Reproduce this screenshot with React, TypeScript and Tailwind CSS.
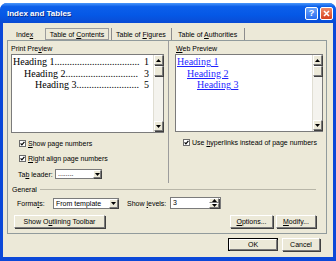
import React from 'react';

const ui = "font-['Liberation_Sans',Arial,sans-serif] text-[7px] leading-[9px] text-black";

function Check() {
    return (
        <svg width="7" height="7" viewBox="0 0 7 7" className="shrink-0">
            <rect x="0.5" y="0.5" width="6" height="6" fill="#fff" stroke="#6b6b6b" />
            <path d="M1.6 3.3 L2.9 4.8 L5.4 1.8" fill="none" stroke="#000" strokeWidth="1.2" />
        </svg>
    );
}

function Arrow({ down = true }: { down?: boolean }) {
    return (
        <svg width="5" height="3" viewBox="0 0 5 3">
            {down ? <path d="M0 0 H5 L2.5 3 Z" fill="#000" /> : <path d="M0 3 H5 L2.5 0 Z" fill="#000" />}
        </svg>
    );
}

function Btn3d({ className = '', children }: { className?: string; children?: React.ReactNode }) {
    return (
        <div
            className={`flex items-center justify-center bg-[#ece9d8] border border-t-white border-l-white border-r-[#7a7a7a] border-b-[#7a7a7a] shadow-[1px_1px_0_#404040] ${className}`}
        >
            {children}
        </div>
    );
}

function Scrollbar() {
    return (
        <div className="w-[10px] shrink-0 flex flex-col bg-[#f4f3ee] border-l border-[#e0ded3]">
            <Btn3d className="h-[10px] w-[9px]">
                <Arrow down={false} />
            </Btn3d>
            <Btn3d className="h-[10px] w-[9px] mt-px" />
            <div className="flex-1" />
            <Btn3d className="h-[10px] w-[9px] mb-px">
                <Arrow />
            </Btn3d>
        </div>
    );
}

// dots are counted per row so the leader fills the line without clipping
function Leader({ indent, label, page, dots }: { indent: string; label: string; page: string; dots: number }) {
    return (
        <div className={`flex justify-between whitespace-nowrap ${indent}`}>
            <span>
                {label}
                {'.'.repeat(dots)}
            </span>
            <span>{page}</span>
        </div>
    );
}

function Button({ children, w, def = false }: { children: React.ReactNode; w: string; def?: boolean }) {
    return (
        <div className={`${w} h-[13px] ${def ? 'border border-black' : ''}`}>
            <Btn3d className="h-full w-full">
                <span>{children}</span>
            </Btn3d>
        </div>
    );
}

export default function App() {
    return (
        <div className={`w-[336px] h-[261px] bg-white pt-[3px] overflow-hidden ${ui}`}>
            <div className="h-[258px] flex flex-col rounded-t-[7px] bg-[#0b48d8] overflow-hidden">
                {/* title bar */}
                <div className="h-[20px] shrink-0 flex items-center pl-[7px] pr-[3px] bg-[linear-gradient(to_bottom,#4a97fa,#0c5fea_18%,#0558e6_60%,#0a4bd4)]">
                    <span className="font-bold text-[8px] text-white [text-shadow:1px_1px_0_#0a2c8a]">Index and Tables</span>
                    <div className="ml-auto flex gap-[2px]">
                        <div className="w-[13px] h-[13px] rounded-[2px] border border-white bg-[linear-gradient(to_bottom,#6aa2fb,#2a6ef0)] flex items-center justify-center text-white font-bold text-[9px] leading-none">
                            ?
                        </div>
                        <div className="w-[13px] h-[13px] rounded-[2px] border border-white bg-[linear-gradient(to_bottom,#f08a68,#d6401e)] flex items-center justify-center">
                            <svg width="7" height="7" viewBox="0 0 7 7">
                                <path d="M1 1 L6 6 M6 1 L1 6" stroke="#fff" strokeWidth="1.6" />
                            </svg>
                        </div>
                    </div>
                </div>

                {/* body */}
                <div className="flex-1 mx-[3px] mb-[4px] bg-[#ece9d8] flex flex-col pl-[4px] pr-[6px]">
                    {/* tabs */}
                    <div className="h-[17px] flex items-end">
                        <div className="w-[38px] h-[12px] pl-[9px] flex items-center">
                            <span>
                                Inde<u>x</u>
                            </span>
                        </div>
                        <div className="w-[64px] h-[12px] border border-[#9c9c9c] flex items-center justify-center">
                            <span>
                                Table of <u>C</u>ontents
                            </span>
                        </div>
                        <div className="ml-[2px] w-[60px] h-[12px] border-l border-[#8c8c8c] pl-[4px] flex items-center">
                            <span>
                                Table of <u>F</u>igures
                            </span>
                        </div>
                        <div className="w-[74px] h-[12px] border-x border-[#8c8c8c] pl-[6px] flex items-center">
                            <span>
                                Table of <u>A</u>uthorities
                            </span>
                        </div>
                    </div>

                    {/* panel */}
                    <div className="h-[194px] border border-[#919b9c] flex flex-col">
                        <div className="h-[142px] flex">
                            {/* left column */}
                            <div className="w-[161px] border-r border-[#9c9c9c] pl-[3px] pt-[3px] flex flex-col">
                                <span>
                                    Print Pre<u>v</u>iew
                                </span>
                                <div className="mt-px w-[153px] h-[79px] border border-[#7b7b7b] bg-white flex">
                                    <div className="flex-1 min-w-0 overflow-hidden pl-px pr-[4px] pt-[1px] font-['Liberation_Serif',serif] text-[10px] leading-[11.5px]">
                                        <Leader indent="" label="Heading 1" page="1" dots={34} />
                                        <Leader indent="pl-[11px]" label="Heading 2" page="3" dots={29} />
                                        <Leader indent="pl-[22px]" label="Heading 3" page="5" dots={25} />
                                    </div>
                                    <Scrollbar />
                                </div>
                                <div className="mt-[5px] h-[10px] pl-[8px] flex items-center gap-[2px]">
                                    <Check />
                                    <span>
                                        <u>S</u>how page numbers
                                    </span>
                                </div>
                                <div className="mt-[5px] h-[10px] pl-[8px] flex items-center gap-[2px]">
                                    <Check />
                                    <span>
                                        <u>R</u>ight align page numbers
                                    </span>
                                </div>
                                <div className="mt-[5px] h-[12px] pl-[7px] flex items-center">
                                    <span className="w-[37px]">
                                        Ta<u>b</u> leader:
                                    </span>
                                    <div className="w-[47px] h-[10px] border border-[#7b7b7b] bg-white flex">
                                        <span className="flex-1 pl-[2px] leading-[7px]">........</span>
                                        <Btn3d className="w-[8px] h-[8px]">
                                            <Arrow />
                                        </Btn3d>
                                    </div>
                                </div>
                            </div>
                            {/* right column */}
                            <div className="flex-1 pl-[6px] pt-[3px] flex flex-col">
                                <span className="pl-px">
                                    <u>W</u>eb Preview
                                </span>
                                <div className="mt-px w-[148px] h-[78px] border border-[#7b7b7b] bg-white flex">
                                    <div className="flex-1 min-w-0 pl-px pt-[1px] font-['Liberation_Serif',serif] text-[10px] leading-[11.5px] text-[#1f1fff] underline">
                                        <div>Heading 1</div>
                                        <div className="pl-[10px]">Heading 2</div>
                                        <div className="pl-[20px]">Heading 3</div>
                                    </div>
                                    <Scrollbar />
                                </div>
                                <div className="mt-[5px] h-[10px] pl-[8px] flex items-center gap-[2px]">
                                    <Check />
                                    <span>
                                        Use <u>h</u>yperlinks instead of page numbers
                                    </span>
                                </div>
                            </div>
                        </div>

                        {/* general */}
                        <div className="flex-1 pl-[4px] pr-[10px] flex flex-col">
                            <div className="mt-[2px] flex items-center gap-[3px]">
                                <span>General</span>
                                <div className="flex-1 h-px bg-[#b8b6a8]" />
                            </div>
                            <div className="mt-[3px] h-[12px] pl-[5px] flex items-center">
                                <span className="w-[36px]">
                                    Forma<u>t</u>s:
                                </span>
                                <div className="w-[66px] h-[11px] border border-[#7b7b7b] bg-white flex">
                                    <span className="flex-1 pl-[2px] leading-[9px]">From template</span>
                                    <Btn3d className="w-[9px] h-[9px]">
                                        <Arrow />
                                    </Btn3d>
                                </div>
                                <span className="ml-[8px] w-[43px]">
                                    Show <u>l</u>evels:
                                </span>
                                <div className="w-[51px] h-[12px] border border-[#7b7b7b] bg-white flex">
                                    <span className="flex-1 pl-[2px] leading-[10px]">3</span>
                                    <div className="w-[11px] flex flex-col">
                                        <Btn3d className="h-[5px] w-[10px]">
                                            <Arrow down={false} />
                                        </Btn3d>
                                        <Btn3d className="h-[5px] w-[10px]">
                                            <Arrow />
                                        </Btn3d>
                                    </div>
                                </div>
                            </div>
                            <div className="mt-[6px] flex items-center">
                                <div className="ml-[2px]">
                                    <Button w="w-[91px]">
                                        Show O<u>u</u>tlining Toolbar
                                    </Button>
                                </div>
                                <div className="ml-auto flex gap-[3px]">
                                    <Button w="w-[43px]">
                                        <u>O</u>ptions...
                                    </Button>
                                    <Button w="w-[40px]">
                                        <u>M</u>odify...
                                    </Button>
                                </div>
                            </div>
                        </div>
                    </div>

                    {/* ok / cancel */}
                    <div className="mt-[4px] flex justify-end gap-[4px] pr-[7px]">
                        <Button w="w-[50px]" def>
                            OK
                        </Button>
                        <Button w="w-[38px]">Cancel</Button>
                    </div>
                </div>
            </div>
        </div>
    );
}
